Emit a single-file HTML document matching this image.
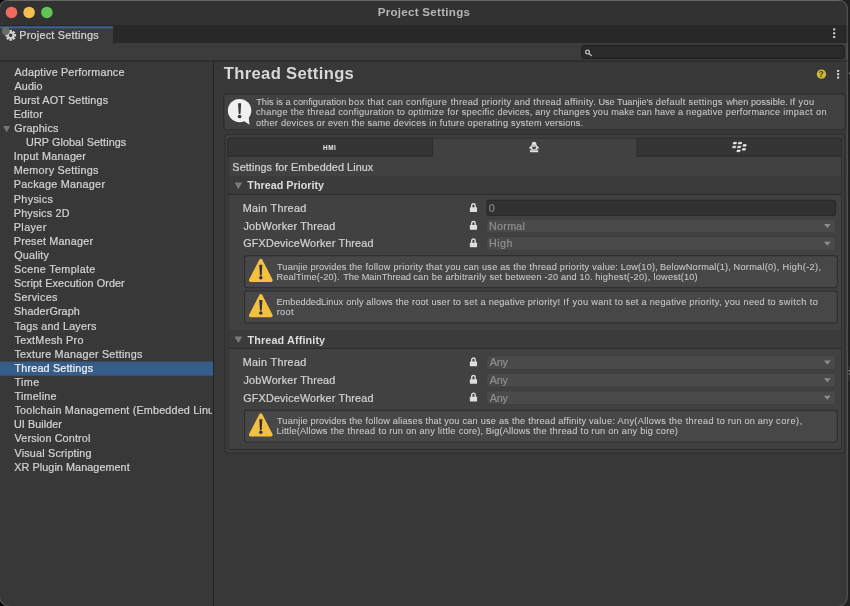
<!DOCTYPE html>
<html lang="en"><head><meta charset="utf-8"><title>Project Settings</title>
<style>
html,body{margin:0;padding:0;}
body{width:850px;height:606px;overflow:hidden;background:#212121;font-family:"Liberation Sans",sans-serif;}
#win{filter:blur(0.35px);will-change:transform;position:absolute;left:-6px;top:-6px;width:862px;height:618px;overflow:hidden;}
#stage{position:absolute;left:6px;top:6px;width:850px;height:606px;}
#art{position:absolute;left:0;top:0;overflow:visible;}
.t{position:absolute;white-space:pre;line-height:20px;height:20px;-webkit-text-stroke:0.22px;}

</style></head>
<body>
<div id="win"><div id="stage">
<svg id="art" width="850" height="606" viewBox="0 0 850 606">
<defs><clipPath id="wc"><path d="M7.80 -0.50H839.25A8.5 8.5 0 0 1 847.75 8.00V597.00A10 10 0 0 1 837.75 607.00H9.50A10.5 10.5 0 0 1 -1.00 596.50V8.30A8.8 8.8 0 0 1 7.80 -0.50Z"/></clipPath></defs>
<rect x="-8.00" y="-8.00" width="16.00" height="16.00" fill="#050505"/>
<rect x="-8.00" y="596.00" width="16.00" height="20.00" fill="#050505"/>
<rect x="846.00" y="-8.00" width="12.00" height="624.00" fill="#212121"/>
<g clip-path="url(#wc)">
<rect x="-8.00" y="-8.00" width="866.00" height="622.00" fill="#383838"/>
<rect x="-8.00" y="-8.00" width="866.00" height="33.00" fill="#323232"/>
<rect x="-8.00" y="25.00" width="866.00" height="18.00" fill="#282828"/>
<rect x="-8.00" y="26.30" width="121.00" height="16.90" fill="#3c3c3c"/>
<rect x="-8.00" y="26.40" width="121.00" height="1.90" fill="#36659a"/>
<rect x="-8.00" y="43.00" width="866.00" height="17.70" fill="#3c3c3c"/>
<rect x="-8.00" y="60.60" width="866.00" height="1.00" fill="#252525"/>
<rect x="581.20" y="45.10" width="263.60" height="13.80" rx="3.5" fill="#1d1d1d"/>
<rect x="582.10" y="46.00" width="261.80" height="12.00" rx="2.6" fill="#2a2a2a"/>
<rect x="213.00" y="61.60" width="1.00" height="554.40" fill="#242424"/>
<rect x="-8.00" y="361.60" width="221.00" height="14.10" fill="#365d89"/>
<circle cx="11.5" cy="12.4" r="5.75" fill="#ed6b5f"/>
<circle cx="29.1" cy="12.4" r="5.75" fill="#f5bf4f"/>
<circle cx="46.9" cy="12.4" r="5.75" fill="#61c554"/>
<rect x="833.10" y="28.40" width="2.10" height="2.00" fill="#cfcfcf"/>
<rect x="833.10" y="32.30" width="2.10" height="2.00" fill="#cfcfcf"/>
<rect x="833.10" y="36.00" width="2.10" height="2.00" fill="#cfcfcf"/>
<g transform="translate(584.8,49.3)"><circle cx="2.7" cy="2.7" r="1.9" fill="none" stroke="#bcbcbc" stroke-width="1.3"/><path d="M4.2 4.2 L6.5 6.2" stroke="#bcbcbc" stroke-width="1.35" stroke-linecap="round"/></g>
<g transform="translate(10.7,35.35) scale(0.45)"><g fill="#d4d4d4"><path fill-rule="evenodd" d="M0 -8.2A8.2 8.2 0 1 0 0 8.2A8.2 8.2 0 1 0 0 -8.2ZM0 -4A4 4 0 1 1 0 4A4 4 0 1 1 0 -4Z"/>
<rect x="-2.7" y="-12" width="5.4" height="5"/><rect x="-2.7" y="7" width="5.4" height="5"/><rect x="-12" y="-2.7" width="5" height="5.4"/><rect x="7" y="-2.7" width="5" height="5.4"/>
<g transform="rotate(45)"><rect x="-2.7" y="-12" width="5.4" height="5"/><rect x="-2.7" y="7" width="5.4" height="5"/><rect x="-12" y="-2.7" width="5" height="5.4"/><rect x="7" y="-2.7" width="5" height="5.4"/></g></g></g>
<ellipse cx="5.8" cy="31.1" rx="3.8" ry="4.1" fill="#6b6b69"/>
<path d="M3.2 126.1H10.1L6.65 132.5Z" fill="#757575"/>
<circle cx="821.45" cy="74.15" r="4.65" fill="#cdb935"/>
<rect x="837.00" y="69.90" width="2.20" height="2.00" fill="#cfcfcf"/>
<rect x="837.00" y="73.25" width="2.20" height="2.00" fill="#cfcfcf"/>
<rect x="837.00" y="76.60" width="2.20" height="2.00" fill="#cfcfcf"/>
<rect x="223.40" y="93.50" width="622.30" height="36.60" rx="3" fill="#2a2a2a"/>
<rect x="224.30" y="94.40" width="620.50" height="34.80" rx="2.1" fill="#414141"/>
<g transform="translate(227.9,98.7)"><circle cx="11.7" cy="11.9" r="11.7" fill="#f0f0f0"/><path d="M15.2 21.9 L21.6 26.1 L20.8 18.2Z" fill="#f0f0f0"/>
<path d="M10.15 4.6 H13.25 L12.6 15.3 H10.8Z" fill="#3a3a3a"/><circle cx="11.7" cy="17.8" r="1.85" fill="#3a3a3a"/></g>
<rect x="224.60" y="134.20" width="620.50" height="319.20" rx="3" fill="#2a2a2a"/>
<rect x="225.50" y="135.10" width="618.70" height="317.40" rx="2.1" fill="#3e3e3e"/>
<rect x="227.50" y="137.70" width="614.60" height="312.30" rx="2.2" fill="#2c2c2c"/>
<rect x="228.40" y="138.60" width="612.80" height="310.50" rx="1.3000000000000003" fill="#414141"/>
<path d="M229.70 137.70H432.99A0.01 0.01 0 0 1 433.00 137.71V156.69A0.01 0.01 0 0 1 432.99 156.70H227.51A0.01 0.01 0 0 1 227.50 156.69V139.90A2.2 2.2 0 0 1 229.70 137.70Z" fill="#2b2b2b"/>
<path d="M229.70 138.60H432.09A0.01 0.01 0 0 1 432.10 138.61V155.79A0.01 0.01 0 0 1 432.09 155.80H228.41A0.01 0.01 0 0 1 228.40 155.79V139.90A1.3000000000000003 1.3000000000000003 0 0 1 229.70 138.60Z" fill="#353535"/>
<path d="M636.61 137.70H839.90A2.2 2.2 0 0 1 842.10 139.90V156.69A0.01 0.01 0 0 1 842.09 156.70H636.61A0.01 0.01 0 0 1 636.60 156.69V137.71A0.01 0.01 0 0 1 636.61 137.70Z" fill="#2b2b2b"/>
<path d="M637.51 138.60H839.90A1.3000000000000003 1.3000000000000003 0 0 1 841.20 139.90V155.79A0.01 0.01 0 0 1 841.19 155.80H637.51A0.01 0.01 0 0 1 637.50 155.79V138.61A0.01 0.01 0 0 1 637.51 138.60Z" fill="#353535"/>
<g transform="translate(528.9,141.8)"><path d="M5.2 0C3.7 0 2.9 1.1 2.9 2.4C2.9 3.2 2.2 3.9 1.4 4.6C0.7 5.2 0.1 5.8 0 6.5L1.1 6.9L2 6.2L1.7 8H8.7L8.4 6.2L9.3 6.9L10.4 6.5C10.3 5.8 9.7 5.2 9 4.6C8.2 3.9 7.5 3.2 7.5 2.4C7.5 1.1 6.7 0 5.2 0Z" fill="#e2e2e2"/>
<rect x="1.1" y="8.45" width="8.2" height="1.95" rx="0.3" fill="#e2e2e2"/>
<circle cx="5.2" cy="5.5" r="1.95" fill="#464646"/><ellipse cx="5.2" cy="4.2" rx="1.7" ry="1.05" fill="#d6d6d6"/><circle cx="5.2" cy="3.4" r="0.6" fill="#8c8c8c"/></g>
<path d="M733.15 143.95L733.60 142.25H736.65L736.20 143.95Z" fill="#f0f0f0" stroke="#f0f0f0" stroke-width="0.5" stroke-linejoin="round"/>
<path d="M738.25 143.95L738.70 142.25H741.75L741.30 143.95Z" fill="#f0f0f0" stroke="#f0f0f0" stroke-width="0.5" stroke-linejoin="round"/>
<path d="M742.85 146.25L743.30 144.55H746.35L745.90 146.25Z" fill="#f0f0f0" stroke="#f0f0f0" stroke-width="0.5" stroke-linejoin="round"/>
<path d="M732.45 147.85L732.90 146.15H735.95L735.50 147.85Z" fill="#f0f0f0" stroke="#f0f0f0" stroke-width="0.5" stroke-linejoin="round"/>
<path d="M737.45 147.85L737.90 146.15H740.95L740.50 147.85Z" fill="#f0f0f0" stroke="#f0f0f0" stroke-width="0.5" stroke-linejoin="round"/>
<path d="M742.15 150.15L742.60 148.45H745.65L745.20 150.15Z" fill="#f0f0f0" stroke="#f0f0f0" stroke-width="0.5" stroke-linejoin="round"/>
<path d="M736.75 151.75L737.20 150.05H740.25L739.80 151.75Z" fill="#f0f0f0" stroke="#f0f0f0" stroke-width="0.5" stroke-linejoin="round"/>
<rect x="228.40" y="176.20" width="612.80" height="17.90" fill="#3b3b3b"/>
<rect x="228.40" y="193.90" width="612.80" height="1.00" fill="#2b2b2b"/>
<path d="M234.6 182.5H242.1L238.35 189.0Z" fill="#7c7c7c"/>
<rect x="228.40" y="330.20" width="612.80" height="17.90" fill="#3b3b3b"/>
<rect x="228.40" y="347.90" width="612.80" height="1.00" fill="#2b2b2b"/>
<path d="M234.6 336.5H242.1L238.35 343.0Z" fill="#7c7c7c"/>
<rect x="486.30" y="199.80" width="349.90" height="16.20" rx="3" fill="#292929"/>
<rect x="487.20" y="200.70" width="348.10" height="14.40" rx="2.1" fill="#313131"/>
<rect x="486.40" y="218.70" width="349.50" height="14.70" rx="3" fill="#3d3d3d"/>
<rect x="487.20" y="219.50" width="347.90" height="13.10" rx="2.2" fill="#4a4a4a"/>
<path d="M824.0 224.10000000000002H830.7L827.35 228.10000000000002Z" fill="#8e8e8e"/>
<rect x="486.40" y="236.30" width="349.50" height="14.70" rx="3" fill="#3d3d3d"/>
<rect x="487.20" y="237.10" width="347.90" height="13.10" rx="2.2" fill="#4a4a4a"/>
<path d="M824.0 241.70000000000002H830.7L827.35 245.70000000000002Z" fill="#8e8e8e"/>
<rect x="486.40" y="355.20" width="349.50" height="14.70" rx="3" fill="#3d3d3d"/>
<rect x="487.20" y="356.00" width="347.90" height="13.10" rx="2.2" fill="#4a4a4a"/>
<path d="M824.0 360.6H830.7L827.35 364.6Z" fill="#8e8e8e"/>
<rect x="486.40" y="372.80" width="349.50" height="14.70" rx="3" fill="#3d3d3d"/>
<rect x="487.20" y="373.60" width="347.90" height="13.10" rx="2.2" fill="#4a4a4a"/>
<path d="M824.0 378.2H830.7L827.35 382.2Z" fill="#8e8e8e"/>
<rect x="486.40" y="390.40" width="349.50" height="14.70" rx="3" fill="#3d3d3d"/>
<rect x="487.20" y="391.20" width="347.90" height="13.10" rx="2.2" fill="#4a4a4a"/>
<path d="M824.0 395.8H830.7L827.35 399.8Z" fill="#8e8e8e"/>
<g transform="translate(469.8,202.95)"><path d="M1.9 4.8V2.55A1.75 1.75 0 0 1 5.4 2.55V4.8" fill="none" stroke="#dedede" stroke-width="1.4"/><rect x="0.05" y="4.4" width="7.2" height="4.7" rx="0.5" fill="#dedede"/></g>
<g transform="translate(469.8,220.65)"><path d="M1.9 4.8V2.55A1.75 1.75 0 0 1 5.4 2.55V4.8" fill="none" stroke="#dedede" stroke-width="1.4"/><rect x="0.05" y="4.4" width="7.2" height="4.7" rx="0.5" fill="#dedede"/></g>
<g transform="translate(469.8,238.25)"><path d="M1.9 4.8V2.55A1.75 1.75 0 0 1 5.4 2.55V4.8" fill="none" stroke="#dedede" stroke-width="1.4"/><rect x="0.05" y="4.4" width="7.2" height="4.7" rx="0.5" fill="#dedede"/></g>
<g transform="translate(469.8,357.15)"><path d="M1.9 4.8V2.55A1.75 1.75 0 0 1 5.4 2.55V4.8" fill="none" stroke="#dedede" stroke-width="1.4"/><rect x="0.05" y="4.4" width="7.2" height="4.7" rx="0.5" fill="#dedede"/></g>
<g transform="translate(469.8,374.75)"><path d="M1.9 4.8V2.55A1.75 1.75 0 0 1 5.4 2.55V4.8" fill="none" stroke="#dedede" stroke-width="1.4"/><rect x="0.05" y="4.4" width="7.2" height="4.7" rx="0.5" fill="#dedede"/></g>
<g transform="translate(469.8,392.35)"><path d="M1.9 4.8V2.55A1.75 1.75 0 0 1 5.4 2.55V4.8" fill="none" stroke="#dedede" stroke-width="1.4"/><rect x="0.05" y="4.4" width="7.2" height="4.7" rx="0.5" fill="#dedede"/></g>
<rect x="244.20" y="255.30" width="593.50" height="32.90" rx="3" fill="#2a2a2a"/>
<rect x="245.10" y="256.20" width="591.70" height="31.10" rx="2.1" fill="#474747"/>
<g transform="translate(248.3,257.30)"><path d="M12.5 3.3 L22.7 23 H2.3Z" fill="#f4c13f" stroke="#f4c13f" stroke-width="3.4" stroke-linejoin="round"/><path d="M10.95 7.5H14.05L13.4 18.1H11.6Z" fill="#303148"/><circle cx="12.5" cy="20.45" r="1.75" fill="#303148"/></g>
<rect x="244.20" y="290.50" width="593.50" height="33.00" rx="3" fill="#2a2a2a"/>
<rect x="245.10" y="291.40" width="591.70" height="31.20" rx="2.1" fill="#474747"/>
<g transform="translate(248.3,292.50)"><path d="M12.5 3.3 L22.7 23 H2.3Z" fill="#f4c13f" stroke="#f4c13f" stroke-width="3.4" stroke-linejoin="round"/><path d="M10.95 7.5H14.05L13.4 18.1H11.6Z" fill="#303148"/><circle cx="12.5" cy="20.45" r="1.75" fill="#303148"/></g>
<rect x="244.20" y="409.80" width="593.50" height="32.80" rx="3" fill="#2a2a2a"/>
<rect x="245.10" y="410.70" width="591.70" height="31.00" rx="2.1" fill="#474747"/>
<g transform="translate(248.3,411.80)"><path d="M12.5 3.3 L22.7 23 H2.3Z" fill="#f4c13f" stroke="#f4c13f" stroke-width="3.4" stroke-linejoin="round"/><path d="M10.95 7.5H14.05L13.4 18.1H11.6Z" fill="#303148"/><circle cx="12.5" cy="20.45" r="1.75" fill="#303148"/></g>
</g>
<rect x="848.90" y="72.10" width="9.10" height="2.30" fill="#6e6e6e"/>
<rect x="848.50" y="366.40" width="9.50" height="15.30" fill="#2d2d2d"/>
<rect x="848.60" y="370.00" width="9.40" height="1.20" fill="#8c8c8c"/>
<rect x="848.60" y="373.40" width="9.40" height="1.30" fill="#707070"/>
<path d="M7.80 0.45H839.25A8 8 0 0 1 847.25 8.45V597.00A9.5 9.5 0 0 1 837.75 606.50H9.50A10 10 0 0 1 -0.50 596.50V8.75A8.3 8.3 0 0 1 7.80 0.45Z" fill="none" stroke="#fff" stroke-opacity=".19" stroke-width="1"/>
<path d="M9 0.45H839" fill="none" stroke="#fff" stroke-opacity=".12" stroke-width="0.9"/>
</svg>
<span class="t" id="li0" style="left:14.50px;top:62.00px;font-size:10.8px;color:#d2d2d2;letter-spacing:0.163px;">Adaptive Performance</span>
<span class="t" id="li1" style="left:14.50px;top:76.00px;font-size:10.8px;color:#d2d2d2;letter-spacing:0.112px;">Audio</span>
<span class="t" id="li2" style="left:13.75px;top:90.00px;font-size:10.8px;color:#d2d2d2;letter-spacing:0.159px;">Burst AOT Settings</span>
<span class="t" id="li3" style="left:13.75px;top:104.00px;font-size:10.8px;color:#d2d2d2;letter-spacing:0.160px;">Editor</span>
<span class="t" id="li4" style="left:14.25px;top:118.00px;font-size:10.8px;color:#d2d2d2;letter-spacing:0.121px;">Graphics</span>
<span class="t" id="li5" style="left:26.10px;top:132.00px;font-size:10.8px;color:#d2d2d2;letter-spacing:0.072px;">URP Global Settings</span>
<span class="t" id="li6" style="left:13.75px;top:146.00px;font-size:10.8px;color:#d2d2d2;letter-spacing:0.212px;">Input Manager</span>
<span class="t" id="li7" style="left:13.75px;top:160.00px;font-size:10.8px;color:#d2d2d2;letter-spacing:0.264px;">Memory Settings</span>
<span class="t" id="li8" style="left:13.75px;top:174.00px;font-size:10.8px;color:#d2d2d2;letter-spacing:0.257px;">Package Manager</span>
<span class="t" id="li9" style="left:13.75px;top:189.00px;font-size:10.8px;color:#d2d2d2;letter-spacing:0.342px;">Physics</span>
<span class="t" id="li10" style="left:13.75px;top:203.00px;font-size:10.8px;color:#d2d2d2;letter-spacing:0.189px;">Physics 2D</span>
<span class="t" id="li11" style="left:13.75px;top:217.00px;font-size:10.8px;color:#d2d2d2;letter-spacing:0.390px;">Player</span>
<span class="t" id="li12" style="left:13.75px;top:231.00px;font-size:10.8px;color:#d2d2d2;letter-spacing:0.185px;">Preset Manager</span>
<span class="t" id="li13" style="left:14.25px;top:245.00px;font-size:10.8px;color:#d2d2d2;letter-spacing:0.183px;">Quality</span>
<span class="t" id="li14" style="left:14.00px;top:259.00px;font-size:10.8px;color:#d2d2d2;letter-spacing:0.315px;">Scene Template</span>
<span class="t" id="li15" style="left:14.00px;top:273.00px;font-size:10.8px;color:#d2d2d2;letter-spacing:0.100px;">Script Execution Order</span>
<span class="t" id="li16" style="left:14.00px;top:287.00px;font-size:10.8px;color:#d2d2d2;letter-spacing:0.293px;">Services</span>
<span class="t" id="li17" style="left:14.00px;top:301.00px;font-size:10.8px;color:#d2d2d2;letter-spacing:0.095px;">ShaderGraph</span>
<span class="t" id="li18" style="left:14.50px;top:316.00px;font-size:10.8px;color:#d2d2d2;letter-spacing:0.186px;">Tags and Layers</span>
<span class="t" id="li19" style="left:14.50px;top:330.00px;font-size:10.8px;color:#d2d2d2;letter-spacing:0.268px;">TextMesh Pro</span>
<span class="t" id="li20" style="left:14.50px;top:344.00px;font-size:10.8px;color:#d2d2d2;letter-spacing:0.211px;">Texture Manager Settings</span>
<span class="t" id="li21" style="left:14.50px;top:358.00px;font-size:10.8px;color:#f2f2f2;letter-spacing:0.171px;">Thread Settings</span>
<span class="t" id="li22" style="left:14.50px;top:372.00px;font-size:10.8px;color:#d2d2d2;letter-spacing:0.350px;">Time</span>
<span class="t" id="li23" style="left:14.50px;top:386.00px;font-size:10.8px;color:#d2d2d2;letter-spacing:0.243px;">Timeline</span>
<span class="t" id="li24" style="left:14.50px;top:400.00px;font-size:10.8px;color:#d2d2d2;letter-spacing:0.168px;max-width:197.9px;overflow:hidden;">Toolchain Management (Embedded Linux)</span>
<span class="t" id="li25" style="left:14.00px;top:414.00px;font-size:10.8px;color:#d2d2d2;letter-spacing:0.056px;">UI Builder</span>
<span class="t" id="li26" style="left:14.50px;top:428.00px;font-size:10.8px;color:#d2d2d2;letter-spacing:0.146px;">Version Control</span>
<span class="t" id="li27" style="left:14.50px;top:443.00px;font-size:10.8px;color:#d2d2d2;letter-spacing:0.190px;">Visual Scripting</span>
<span class="t" id="li28" style="left:14.25px;top:457.00px;font-size:10.8px;color:#d2d2d2;letter-spacing:0.074px;">XR Plugin Management</span>
<span class="t" id="wtitle" style="left:377.65px;top:2.00px;font-size:11.6px;color:#b6b6b6;font-weight:bold;-webkit-text-stroke:0;letter-spacing:0.270px;">Project Settings</span>
<span class="t" id="tab" style="left:19.25px;top:25.00px;font-size:10.8px;color:#d6d6d6;letter-spacing:0.247px;">Project Settings</span>
<span class="t" id="q" style="left:818.50px;top:64.00px;font-size:8.6px;color:#4a4218;font-weight:bold;-webkit-text-stroke:0;">?</span>
<span class="t" id="h1" style="left:223.80px;top:63.50px;font-size:16.6px;color:#d8d8d8;font-weight:bold;-webkit-text-stroke:0;letter-spacing:0.332px;">Thread Settings</span>
<span class="t" id="hb0_0" style="left:256.15px;top:92.00px;font-size:9.2px;color:#c8c8c8;letter-spacing:0.037px;-webkit-text-stroke:0.08px;">This is a configuration </span>
<span class="t" id="hb0_1" style="left:348.50px;top:92.00px;font-size:9.2px;color:#c8c8c8;letter-spacing:0.380px;-webkit-text-stroke:0.08px;">box that can configure </span>
<span class="t" id="hb0_2" style="left:450.65px;top:92.00px;font-size:9.2px;color:#c8c8c8;letter-spacing:0.305px;-webkit-text-stroke:0.08px;">thread priority and </span>
<span class="t" id="hb0_3" style="left:533.30px;top:92.00px;font-size:9.2px;color:#c8c8c8;letter-spacing:0.369px;-webkit-text-stroke:0.08px;">thread affinity. </span>
<span class="t" id="hb0_4" style="left:598.45px;top:92.00px;font-size:9.2px;color:#c8c8c8;letter-spacing:-0.030px;-webkit-text-stroke:0.08px;">Use Tuanjie&#x27;s </span>
<span class="t" id="hb0_5" style="left:655.70px;top:92.00px;font-size:9.2px;color:#c8c8c8;letter-spacing:0.332px;-webkit-text-stroke:0.08px;">default settings </span>
<span class="t" id="hb0_6" style="left:726.20px;top:92.00px;font-size:9.2px;color:#c8c8c8;letter-spacing:0.050px;-webkit-text-stroke:0.08px;">when possible. </span>
<span class="t" id="hb0_7" style="left:789.65px;top:92.00px;font-size:9.2px;color:#c8c8c8;letter-spacing:0.420px;-webkit-text-stroke:0.08px;">If you</span>
<span class="t" id="hb1_0" style="left:255.90px;top:102.00px;font-size:9.2px;color:#c8c8c8;letter-spacing:0.315px;-webkit-text-stroke:0.08px;">change the thread </span>
<span class="t" id="hb1_1" style="left:338.25px;top:102.00px;font-size:9.2px;color:#c8c8c8;letter-spacing:0.253px;-webkit-text-stroke:0.08px;">configuration to </span>
<span class="t" id="hb1_2" style="left:407.90px;top:102.00px;font-size:9.2px;color:#c8c8c8;letter-spacing:0.285px;-webkit-text-stroke:0.08px;">optimize for specific </span>
<span class="t" id="hb1_3" style="left:497.40px;top:102.00px;font-size:9.2px;color:#c8c8c8;letter-spacing:0.167px;-webkit-text-stroke:0.08px;">devices, any </span>
<span class="t" id="hb1_4" style="left:553.25px;top:102.00px;font-size:9.2px;color:#c8c8c8;letter-spacing:0.295px;-webkit-text-stroke:0.08px;">changes you </span>
<span class="t" id="hb1_5" style="left:611.15px;top:102.00px;font-size:9.2px;color:#c8c8c8;letter-spacing:0.142px;-webkit-text-stroke:0.08px;">make can have a </span>
<span class="t" id="hb1_6" style="left:686.00px;top:102.00px;font-size:9.2px;color:#c8c8c8;letter-spacing:0.275px;-webkit-text-stroke:0.08px;">negative performance </span>
<span class="t" id="hb1_7" style="left:783.15px;top:102.00px;font-size:9.2px;color:#c8c8c8;letter-spacing:0.469px;-webkit-text-stroke:0.08px;">impact on</span>
<span class="t" id="hb2_0" style="left:255.90px;top:113.00px;font-size:9.2px;color:#c8c8c8;letter-spacing:0.252px;-webkit-text-stroke:0.08px;">other devices or </span>
<span class="t" id="hb2_1" style="left:328.05px;top:113.00px;font-size:9.2px;color:#c8c8c8;letter-spacing:0.177px;-webkit-text-stroke:0.08px;">even the same </span>
<span class="t" id="hb2_2" style="left:393.40px;top:113.00px;font-size:9.2px;color:#c8c8c8;letter-spacing:0.263px;-webkit-text-stroke:0.08px;">devices in future </span>
<span class="t" id="hb2_3" style="left:467.55px;top:113.00px;font-size:9.2px;color:#c8c8c8;letter-spacing:0.270px;-webkit-text-stroke:0.08px;">operating system </span>
<span class="t" id="hb2_4" style="left:545.00px;top:113.00px;font-size:9.2px;color:#c8c8c8;letter-spacing:0.150px;-webkit-text-stroke:0.08px;">versions.</span>
<span class="t" id="hmi" style="left:323.10px;top:137.50px;font-size:6.4px;color:#e8e8e8;font-weight:bold;-webkit-text-stroke:0;letter-spacing:0.525px;">HMI</span>
<span class="t" id="sfl" style="left:232.35px;top:157.00px;font-size:10.8px;color:#d2d2d2;letter-spacing:0.087px;">Settings for Embedded Linux</span>
<span class="t" id="tp" style="left:247.30px;top:175.00px;font-size:10.8px;color:#dcdcdc;font-weight:bold;-webkit-text-stroke:0;letter-spacing:0.000px;">Thread Priority</span>
<span class="t" id="ta" style="left:247.45px;top:330.00px;font-size:10.8px;color:#dcdcdc;font-weight:bold;-webkit-text-stroke:0;letter-spacing:0.136px;">Thread Affinity</span>
<span class="t" id="lab00" style="left:242.75px;top:198.00px;font-size:10.8px;color:#d2d2d2;letter-spacing:0.305px;">Main Thread</span>
<span class="t" id="lab01" style="left:243.50px;top:216.00px;font-size:10.8px;color:#d2d2d2;letter-spacing:0.187px;">JobWorker Thread</span>
<span class="t" id="lab02" style="left:243.25px;top:233.00px;font-size:10.8px;color:#d2d2d2;letter-spacing:0.162px;">GFXDeviceWorker Thread</span>
<span class="t" id="lab10" style="left:242.75px;top:352.00px;font-size:10.8px;color:#d2d2d2;letter-spacing:0.305px;">Main Thread</span>
<span class="t" id="lab11" style="left:243.50px;top:370.00px;font-size:10.8px;color:#d2d2d2;letter-spacing:0.187px;">JobWorker Thread</span>
<span class="t" id="lab12" style="left:243.25px;top:388.00px;font-size:10.8px;color:#d2d2d2;letter-spacing:0.162px;">GFXDeviceWorker Thread</span>
<span class="t" id="v0" style="left:488.80px;top:198.00px;font-size:10.8px;color:#868686;">0</span>
<span class="t" id="v1" style="left:489.10px;top:216.00px;font-size:10.8px;color:#8e8e8e;letter-spacing:0.220px;">Normal</span>
<span class="t" id="v2" style="left:489.10px;top:233.00px;font-size:10.8px;color:#8e8e8e;letter-spacing:0.400px;">High</span>
<span class="t" id="a0" style="left:489.85px;top:352.00px;font-size:10.8px;color:#8e8e8e;letter-spacing:-0.325px;">Any</span>
<span class="t" id="a1" style="left:489.85px;top:370.00px;font-size:10.8px;color:#8e8e8e;letter-spacing:-0.325px;">Any</span>
<span class="t" id="a2" style="left:489.85px;top:388.00px;font-size:10.8px;color:#8e8e8e;letter-spacing:-0.325px;">Any</span>
<span class="t" id="w00_0" style="left:276.95px;top:257.00px;font-size:9.2px;color:#c8c8c8;letter-spacing:0.164px;-webkit-text-stroke:0.08px;">Tuanjie provides the </span>
<span class="t" id="w00_1" style="left:365.50px;top:257.00px;font-size:9.2px;color:#c8c8c8;letter-spacing:0.274px;-webkit-text-stroke:0.08px;">follow priority that </span>
<span class="t" id="w00_2" style="left:445.35px;top:257.00px;font-size:9.2px;color:#c8c8c8;letter-spacing:0.236px;-webkit-text-stroke:0.08px;">you can use as </span>
<span class="t" id="w00_3" style="left:513.15px;top:257.00px;font-size:9.2px;color:#c8c8c8;letter-spacing:0.252px;-webkit-text-stroke:0.08px;">the thread priority </span>
<span class="t" id="w00_4" style="left:592.35px;top:257.00px;font-size:9.2px;color:#c8c8c8;letter-spacing:0.183px;-webkit-text-stroke:0.08px;">value: Low(10), </span>
<span class="t" id="w00_5" style="left:659.95px;top:257.00px;font-size:9.2px;color:#c8c8c8;letter-spacing:0.171px;-webkit-text-stroke:0.08px;">BelowNormal(1), </span>
<span class="t" id="w00_6" style="left:733.60px;top:257.00px;font-size:9.2px;color:#c8c8c8;letter-spacing:0.250px;-webkit-text-stroke:0.08px;">Normal(0), </span>
<span class="t" id="w00_7" style="left:782.50px;top:257.00px;font-size:9.2px;color:#c8c8c8;letter-spacing:0.338px;-webkit-text-stroke:0.08px;">High(-2),</span>
<span class="t" id="w01_0" style="left:276.45px;top:267.00px;font-size:9.2px;color:#c8c8c8;letter-spacing:0.174px;-webkit-text-stroke:0.08px;">RealTime(-20). </span>
<span class="t" id="w01_1" style="left:343.15px;top:267.00px;font-size:9.2px;color:#c8c8c8;letter-spacing:0.029px;-webkit-text-stroke:0.08px;">The MainThread </span>
<span class="t" id="w01_2" style="left:413.20px;top:267.00px;font-size:9.2px;color:#c8c8c8;letter-spacing:0.296px;-webkit-text-stroke:0.08px;">can be arbitrarily </span>
<span class="t" id="w01_3" style="left:489.40px;top:267.00px;font-size:9.2px;color:#c8c8c8;letter-spacing:0.258px;-webkit-text-stroke:0.08px;">set between </span>
<span class="t" id="w01_4" style="left:544.55px;top:267.00px;font-size:9.2px;color:#c8c8c8;letter-spacing:0.146px;-webkit-text-stroke:0.08px;">-20 and 10. </span>
<span class="t" id="w01_5" style="left:595.15px;top:267.00px;font-size:9.2px;color:#c8c8c8;letter-spacing:0.290px;-webkit-text-stroke:0.08px;">highest(-20), </span>
<span class="t" id="w01_6" style="left:653.55px;top:267.00px;font-size:9.2px;color:#c8c8c8;letter-spacing:0.189px;-webkit-text-stroke:0.08px;">lowest(10)</span>
<span class="t" id="w10_0" style="left:276.45px;top:292.00px;font-size:9.2px;color:#c8c8c8;letter-spacing:0.031px;-webkit-text-stroke:0.08px;">EmbeddedLinux </span>
<span class="t" id="w10_1" style="left:346.25px;top:292.00px;font-size:9.2px;color:#c8c8c8;letter-spacing:0.142px;-webkit-text-stroke:0.08px;">only allows </span>
<span class="t" id="w10_2" style="left:395.65px;top:292.00px;font-size:9.2px;color:#c8c8c8;letter-spacing:0.233px;-webkit-text-stroke:0.08px;">the root user </span>
<span class="t" id="w10_3" style="left:452.95px;top:292.00px;font-size:9.2px;color:#c8c8c8;letter-spacing:0.368px;-webkit-text-stroke:0.08px;">to set a </span>
<span class="t" id="w10_4" style="left:488.70px;top:292.00px;font-size:9.2px;color:#c8c8c8;letter-spacing:0.200px;-webkit-text-stroke:0.08px;">negative </span>
<span class="t" id="w10_5" style="left:527.65px;top:292.00px;font-size:9.2px;color:#c8c8c8;letter-spacing:0.297px;-webkit-text-stroke:0.08px;">priority! If </span>
<span class="t" id="w10_6" style="left:572.55px;top:292.00px;font-size:9.2px;color:#c8c8c8;letter-spacing:0.321px;-webkit-text-stroke:0.08px;">you want to </span>
<span class="t" id="w10_7" style="left:625.60px;top:292.00px;font-size:9.2px;color:#c8c8c8;letter-spacing:0.269px;-webkit-text-stroke:0.08px;">set a negative </span>
<span class="t" id="w10_8" style="left:689.20px;top:292.00px;font-size:9.2px;color:#c8c8c8;letter-spacing:0.353px;-webkit-text-stroke:0.08px;">priority, you </span>
<span class="t" id="w10_9" style="left:743.55px;top:292.00px;font-size:9.2px;color:#c8c8c8;letter-spacing:0.235px;-webkit-text-stroke:0.08px;">need to </span>
<span class="t" id="w10_10" style="left:778.75px;top:292.00px;font-size:9.2px;color:#c8c8c8;letter-spacing:0.419px;-webkit-text-stroke:0.08px;">switch to</span>
<span class="t" id="w11_0" style="left:276.70px;top:302.00px;font-size:9.2px;color:#c8c8c8;letter-spacing:0.367px;-webkit-text-stroke:0.08px;">root</span>
<span class="t" id="w20_0" style="left:276.95px;top:411.00px;font-size:9.2px;color:#c8c8c8;letter-spacing:0.164px;-webkit-text-stroke:0.08px;">Tuanjie provides the </span>
<span class="t" id="w20_1" style="left:365.50px;top:411.00px;font-size:9.2px;color:#c8c8c8;letter-spacing:0.181px;-webkit-text-stroke:0.08px;">follow aliases that </span>
<span class="t" id="w20_2" style="left:444.15px;top:411.00px;font-size:9.2px;color:#c8c8c8;letter-spacing:0.229px;-webkit-text-stroke:0.08px;">you can use as </span>
<span class="t" id="w20_3" style="left:512.00px;top:411.00px;font-size:9.2px;color:#c8c8c8;letter-spacing:0.211px;-webkit-text-stroke:0.08px;">the thread affinity </span>
<span class="t" id="w20_4" style="left:588.95px;top:411.00px;font-size:9.2px;color:#c8c8c8;letter-spacing:0.302px;-webkit-text-stroke:0.08px;">value: Any(Allows </span>
<span class="t" id="w20_5" style="left:668.95px;top:411.00px;font-size:9.2px;color:#c8c8c8;letter-spacing:0.360px;-webkit-text-stroke:0.08px;">the thread to </span>
<span class="t" id="w20_6" style="left:727.85px;top:411.00px;font-size:9.2px;color:#c8c8c8;letter-spacing:0.192px;-webkit-text-stroke:0.08px;">run on any </span>
<span class="t" id="w20_7" style="left:776.05px;top:411.00px;font-size:9.2px;color:#c8c8c8;letter-spacing:0.540px;-webkit-text-stroke:0.08px;">core),</span>
<span class="t" id="w21_0" style="left:276.45px;top:421.00px;font-size:9.2px;color:#c8c8c8;letter-spacing:0.159px;-webkit-text-stroke:0.08px;">Little(Allows </span>
<span class="t" id="w21_1" style="left:330.80px;top:421.00px;font-size:9.2px;color:#c8c8c8;letter-spacing:0.332px;-webkit-text-stroke:0.08px;">the thread to </span>
<span class="t" id="w21_2" style="left:389.15px;top:421.00px;font-size:9.2px;color:#c8c8c8;letter-spacing:0.246px;-webkit-text-stroke:0.08px;">run on any little </span>
<span class="t" id="w21_3" style="left:458.75px;top:421.00px;font-size:9.2px;color:#c8c8c8;letter-spacing:0.151px;-webkit-text-stroke:0.08px;">core), Big(Allows </span>
<span class="t" id="w21_4" style="left:533.15px;top:421.00px;font-size:9.2px;color:#c8c8c8;letter-spacing:0.317px;-webkit-text-stroke:0.08px;">the thread to </span>
<span class="t" id="w21_5" style="left:591.35px;top:421.00px;font-size:9.2px;color:#c8c8c8;letter-spacing:0.265px;-webkit-text-stroke:0.08px;">run on any </span>
<span class="t" id="w21_6" style="left:640.15px;top:421.00px;font-size:9.2px;color:#c8c8c8;letter-spacing:0.256px;-webkit-text-stroke:0.08px;">big core)</span>
</div></div>
</body></html>
